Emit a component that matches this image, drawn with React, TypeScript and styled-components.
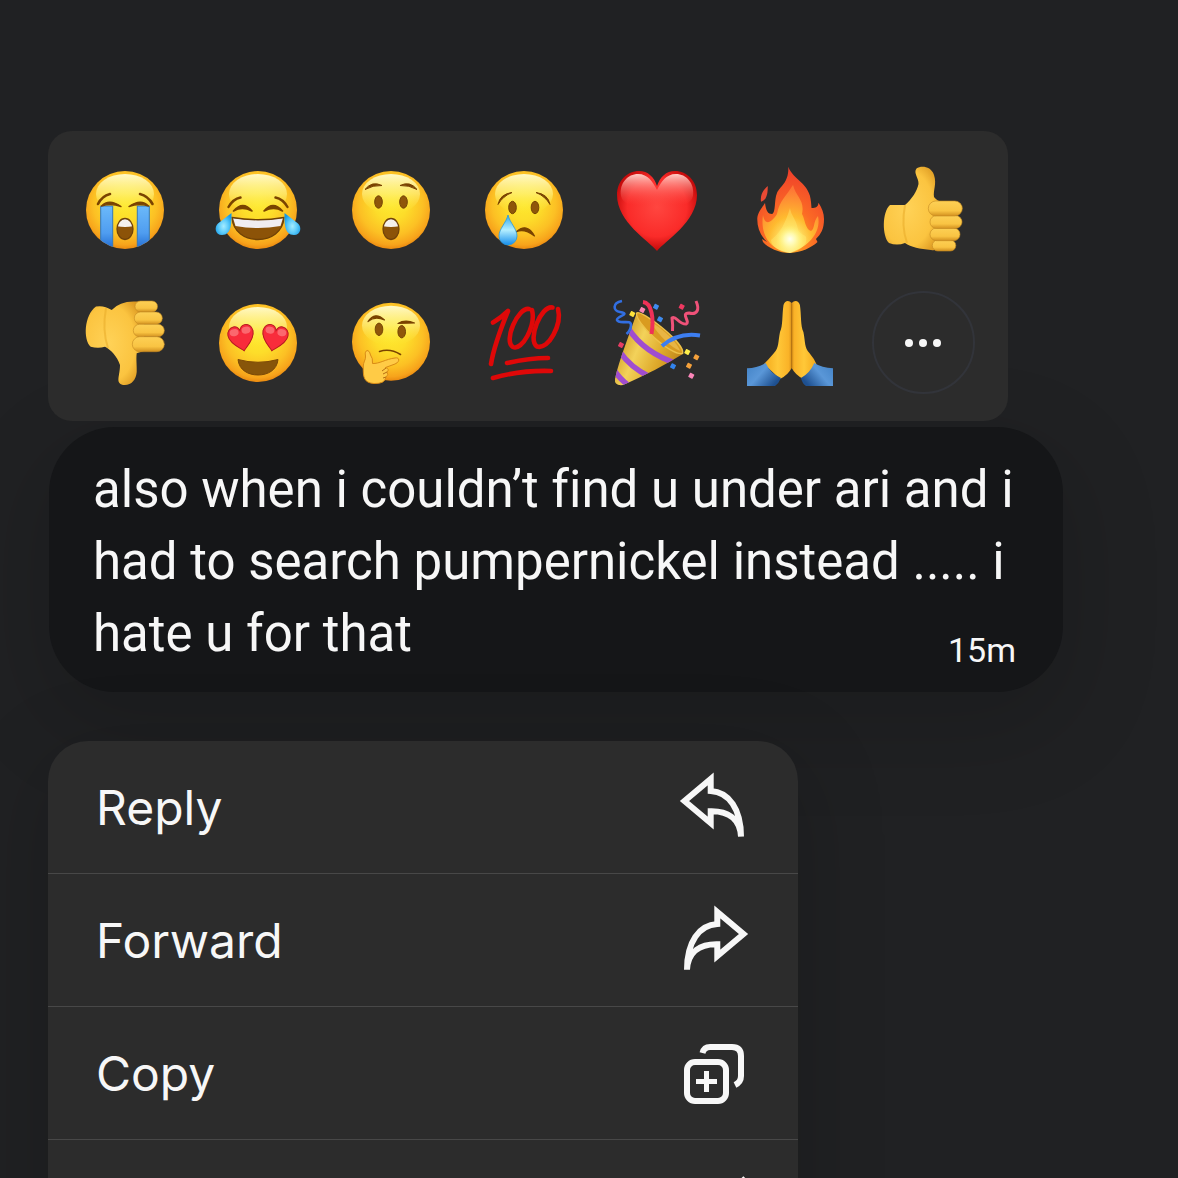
import React from "react";
import styled, { createGlobalStyle } from "styled-components";

const GlobalStyle = createGlobalStyle`
  * { box-sizing: border-box; }
  body { margin: 0; background: #202123; }
  button { font: inherit; color: inherit; border: 0; background: none; padding: 0; cursor: pointer; }
`;

const Screen = styled.main`
  display: flex;
  flex-direction: column;
  align-items: flex-start;
  height: 100vh;
  overflow: hidden;
  padding: 131px 48px 0;
  background: #202123;
  color: #f7f7f7;
  font-family: Inter, "Liberation Sans", sans-serif;
`;

const Reactions = styled.section`
  position: relative;
  z-index: 1;
  display: grid;
  grid-template-columns: repeat(7, 1fr);
  grid-auto-rows: 133px;
  width: 100%;
  max-width: 960px;
  padding: 12px 18px 12px 10px;
  border-radius: 24px;
  background: #2c2c2c;
`;

const Reaction = styled.button`
  display: grid;
  place-items: center;
`;

const EmojiArt = styled.svg`
  display: block;
  width: 90px;
  height: 90px;
  overflow: visible;
`;

const MoreCircle = styled.span`
  display: flex;
  align-items: center;
  justify-content: center;
  gap: 6px;
  width: 103px;
  height: 103px;
  border: 2px solid #32343a;
  border-radius: 50%;
`;

const Dot = styled.span`
  width: 8px;
  height: 8px;
  border-radius: 50%;
  background: #f7f7f7;
`;

const Bubble = styled.article`
  width: 100%;
  max-width: 1014px;
  margin: 6px 0 49px 1px;
  padding: 27px 47px 22px 44px;
  border-radius: 66px;
  background: #151618;
  font-family: Roboto, "Liberation Sans", sans-serif;
  box-shadow: 0 30px 90px 10px rgba(0, 0, 0, 0.15);
`;

const Message = styled.p`
  margin: 0;
  font-size: 51px;
  line-height: 72px;
  font-variant-ligatures: none;
`;

const Time = styled.time`
  float: right;
  margin-top: 32px;
  font-size: 34px;
  line-height: 40px;
`;

const Menu = styled.nav`
  position: relative;
  width: 100%;
  max-width: 750px;
  border-radius: 40px;
  background: #2c2c2c;
  box-shadow: 0 20px 90px rgba(0, 0, 0, 0.18);
`;

const MenuItem = styled.button`
  display: flex;
  align-items: center;
  justify-content: space-between;
  width: 100%;
  height: 133px;
  padding: 0 48px;
  font-size: 48px;
  text-align: left;

  &:not(:last-child) {
    border-bottom: 1px solid #484848;
  }
`;

const MenuIcon = styled.svg`
  width: 72px;
  height: 72px;
  margin-left: auto;
  fill: none;
  stroke: currentColor;
  stroke-width: 6;
`;

const BROWN = "#7a4300";
const HEART = "M45 86 C37 76 5 57 5 30 C5 16 15 6 27 6 C36 6 42 12 45 21 C48 12 54 6 63 6 C75 6 85 16 85 30 C85 57 53 76 45 86Z";
const CONE = "M24.7 15C18 35 7 62 3 81Q2 88 11 87C32 78 55 66 70.7 56Q48 44 24.7 15Z";

const Defs = styled.svg`
  position: absolute;
  width: 0;
  height: 0;
`;

const Gradients = () => (
  <Defs aria-hidden="true">
    <defs>
      <radialGradient id="face" cx=".5" cy=".42" r=".6">
        <stop offset="0" stopColor="#fee92e" />
        <stop offset=".35" stopColor="#fddd2a" />
        <stop offset=".68" stopColor="#fcc024" />
        <stop offset=".88" stopColor="#f7a31b" />
        <stop offset="1" stopColor="#e57f0c" />
      </radialGradient>
      <linearGradient id="shine" x1="0" y1="0" x2="0" y2="1">
        <stop offset="0" stopColor="#fffcd0" stopOpacity=".95" />
        <stop offset=".5" stopColor="#fff68a" stopOpacity=".6" />
        <stop offset="1" stopColor="#ffe832" stopOpacity="0" />
      </linearGradient>
      <linearGradient id="stream" x1="0" y1="0" x2="0" y2="1">
        <stop offset="0" stopColor="#6bb9fa" />
        <stop offset=".6" stopColor="#4f9df0" />
        <stop offset="1" stopColor="#1c65cc" />
      </linearGradient>
      <radialGradient id="tear" cx=".5" cy=".6" r=".6">
        <stop offset="0" stopColor="#a5ecff" />
        <stop offset=".5" stopColor="#5ccbfa" />
        <stop offset="1" stopColor="#149ae8" />
      </radialGradient>
      <linearGradient id="drop" x1="0" y1="0" x2="0" y2="1">
        <stop offset="0" stopColor="#2fa5ea" />
        <stop offset=".5" stopColor="#b4efff" />
        <stop offset="1" stopColor="#148dec" />
      </linearGradient>
      <radialGradient id="heart" cx=".5" cy=".45" r=".62">
        <stop offset="0" stopColor="#ff4640" />
        <stop offset=".6" stopColor="#fa2b29" />
        <stop offset=".85" stopColor="#c90d0d" />
        <stop offset="1" stopColor="#a80808" />
      </radialGradient>
      <linearGradient id="gloss" x1="0" y1="0" x2="0" y2="1">
        <stop offset="0" stopColor="#ffcdc6" />
        <stop offset="1" stopColor="#ff4b43" stopOpacity="0" />
      </linearGradient>
      <radialGradient id="flameOuter" cx=".5" cy=".85" r=".85">
        <stop offset="0" stopColor="#ffb41e" />
        <stop offset=".45" stopColor="#fb6a25" />
        <stop offset="1" stopColor="#ee3b2b" />
      </radialGradient>
      <radialGradient id="flameInner" cx=".5" cy=".86" r=".8">
        <stop offset="0" stopColor="#fffff0" />
        <stop offset=".22" stopColor="#fff27a" />
        <stop offset=".5" stopColor="#ffc531" />
        <stop offset="1" stopColor="#ff7c38" />
      </radialGradient>
      <radialGradient id="flameCore" cx=".5" cy=".5" r=".5">
        <stop offset="0" stopColor="#fffff0" />
        <stop offset=".4" stopColor="#fffcb5" stopOpacity=".85" />
        <stop offset="1" stopColor="#fff06a" stopOpacity="0" />
      </radialGradient>
      <radialGradient id="hand" cx=".4" cy=".5" r=".65">
        <stop offset="0" stopColor="#ffd257" />
        <stop offset=".7" stopColor="#fbc440" />
        <stop offset="1" stopColor="#dd9a22" />
      </radialGradient>
      <linearGradient id="finger" x1="0" y1="0" x2="0" y2="1">
        <stop offset="0" stopColor="#fdd055" />
        <stop offset=".65" stopColor="#f9c443" />
        <stop offset="1" stopColor="#d2901f" />
      </linearGradient>
      <linearGradient id="cone" x1="0" y1=".3" x2="1" y2=".75">
        <stop offset="0" stopColor="#c78b16" />
        <stop offset=".35" stopColor="#f3d25a" />
        <stop offset=".65" stopColor="#dfab2c" />
        <stop offset="1" stopColor="#b97c16" />
      </linearGradient>
      <linearGradient id="palm" x1="0" y1="0" x2="1" y2="0">
        <stop offset="0" stopColor="#f3a91c" />
        <stop offset=".5" stopColor="#ffc838" />
        <stop offset=".9" stopColor="#fab227" />
        <stop offset="1" stopColor="#d58d18" />
      </linearGradient>
      <linearGradient id="sleeve" x1="0" y1="0" x2="1" y2=".6">
        <stop offset="0" stopColor="#4282c6" />
        <stop offset=".5" stopColor="#5a97d8" />
        <stop offset="1" stopColor="#1e5090" />
      </linearGradient>
      <clipPath id="faceClip"><circle cx="45" cy="45" r="39" /></clipPath>
      <clipPath id="mouthClip"><ellipse cx="45" cy="64" rx="8" ry="10.5" /></clipPath>
      <clipPath id="coneClip"><path d={CONE} /></clipPath>
    </defs>
  </Defs>
);

const Face = ({ cy = 45 }: { cy?: number }) => (
  <>
    <circle cx="45" cy={cy} r="39" fill="url(#face)" />
    <ellipse cx="45" cy={cy - 16} rx="29" ry="20" fill="url(#shine)" />
  </>
);

const Lines = ({ d, width = 3 }: { d: string; width?: number }) => (
  <path d={d} fill="none" stroke={BROWN} strokeWidth={width} strokeLinecap="round" strokeLinejoin="round" />
);

const Eyes = ({ points }: { points: number[][] }) => (
  <>
    {points.map(([x, y]) => (
      <ellipse key={x} cx={x} cy={y} rx="3.8" ry="6.2" fill="#8f560a" stroke="#754503" strokeWidth="1" />
    ))}
  </>
);

const OpenMouth = () => (
  <>
    <ellipse cx="45" cy="64" rx="8" ry="10.5" fill="#8c5308" />
    <path d="M36 52H54V61Q45 63 36 61Z" fill="#f5f1ec" clipPath="url(#mouthClip)" />
    <ellipse cx="45" cy="64" rx="8" ry="10.5" fill="none" stroke="#71430a" strokeWidth="1.3" />
  </>
);

const Fingers = ({ boxes }: { boxes: number[][] }) => (
  <>
    {boxes.map(([x, y, w, h]) => (
      <rect key={y} x={x} y={y} width={w} height={h} rx={h / 2} fill="url(#finger)" stroke="#c58a22" strokeWidth=".6" />
    ))}
  </>
);

const HeartEye = ({ x, tilt }: { x: number; tilt: number }) => (
  <g transform={`translate(${x} 40) rotate(${tilt}) scale(.32) translate(-45 -45)`}>
    <path d={HEART} fill="#f82c3b" stroke="#b31a20" strokeWidth="3" />
    <ellipse cx="26" cy="24" rx="14" ry="11" fill="#ffb1ad" opacity=".45" />
    <ellipse cx="64" cy="24" rx="14" ry="11" fill="#ffb1ad" opacity=".45" />
  </g>
);

const confetti: [number, number, string][] = [
  [20.3, 16, "#ffe33b"], [30.3, 12, "#fb86b4"], [44, 8.7, "#3f8cf0"], [48, 21.3, "#3f8cf0"],
  [69.7, 8.7, "#ee3860"], [9, 47, "#e73d63"], [75.3, 54, "#fff04b"], [84.3, 59.3, "#f5a13b"],
  [77, 67.7, "#f5a13b"], [61, 68.3, "#3283ed"], [79.3, 77.7, "#fb86b9"],
];

const reactions: { name: string; art: React.ReactNode }[] = [
  {
    name: "Loudly crying",
    art: (
      <>
        <Face />
        <g clipPath="url(#faceClip)" stroke="#3479ba" strokeWidth="1">
          <path d="M20.7 41H32.7V86H20.7Z" fill="url(#stream)" />
          <path d="M57.3 41H69.3V86H57.3Z" fill="url(#stream)" />
        </g>
        <Lines d="M18 39Q22 31 30 29M60 29Q68 31 72.5 39" width={2.6} />
        <path d="M21.5 41Q29 33 41 41.5Q31 38 21.5 41ZM49 41.5Q61 33 68.5 41Q59 38 49 41.5Z" fill={BROWN} stroke={BROWN} strokeWidth="1.4" strokeLinejoin="round" />
        <OpenMouth />
      </>
    ),
  },
  {
    name: "Tears of joy",
    art: (
      <>
        <Face />
        <Lines d="M15.5 42Q20 34 27.5 32.5M62.5 32.5Q70 34 74.5 42" width={2.4} />
        <path d="M20.5 46Q30 35 39 46Q29 41 20.5 46ZM51 46Q60 35 69.5 46Q61 41 51 46Z" fill={BROWN} stroke={BROWN} strokeWidth="1.6" strokeLinejoin="round" />
        <path d="M19 52.5Q45 57 71 52.5C70 67 58 74.5 45 74.5S20 67 19 52.5Z" fill="#8c5308" />
        <path d="M20 53Q45 57 70 53L67.5 61Q45 65 22.5 61Z" fill="#f0edf0" />
        <path d="M19 52.5Q45 57 71 52.5C70 67 58 74.5 45 74.5S20 67 19 52.5Z" fill="none" stroke="#6f4105" strokeWidth="1.3" />
        <path d="M18.5 48C18.5 57 19 70 9 70C2 70 1 62 5 58.5Q12 53 18.5 48Z" fill="url(#tear)" />
        <path d="M71.5 48C71.5 57 71 70 81 70C88 70 89 62 85 58.5Q78 53 71.5 48Z" fill="url(#tear)" />
      </>
    ),
  },
  {
    name: "Astonished",
    art: (
      <>
        <Face />
        <path d="M19 24.5Q26 15.5 36 20.5Q27 20 19 24.5ZM54 20.5Q64 15.5 71 24.5Q63 20 54 20.5Z" fill={BROWN} stroke={BROWN} strokeLinejoin="round" />
        <Eyes points={[[32.5, 37], [57.5, 37]]} />
        <OpenMouth />
      </>
    ),
  },
  {
    name: "Crying",
    art: (
      <>
        <Face />
        <path d="M19 39.5Q21 29 33 27.5Q24 31 19 39.5ZM57 27.5Q69 29 71 39.5Q66 31 57 27.5Z" fill={BROWN} stroke={BROWN} strokeLinejoin="round" />
        <Eyes points={[[33.5, 42.5], [56, 42.5]]} />
        <path d="M37 67Q48 57 55.5 71Q45 63 37 67Z" fill={BROWN} stroke={BROWN} strokeWidth="1.2" strokeLinejoin="round" />
        <path d="M29 50C31 58 38 64 38 71A9 9 0 0 1 20 71C20 64 27 58 29 50Z" fill="url(#drop)" stroke="#229ae5" strokeWidth=".8" />
      </>
    ),
  },
  {
    name: "Heart",
    art: (
      <>
        <path d={HEART} fill="url(#heart)" />
        <path d="M9 31C7 18 16 9 26 9C36 9 41 17 45 25C49 17 54 9 64 9C74 9 83 18 81 31C78 43 62 40 45 40S12 43 9 31Z" fill="url(#gloss)" />
      </>
    ),
  },
  {
    name: "Fire",
    art: (
      <>
        <path d="M43.3 1.7C48 15 65 18 66 37L66.5 43C71 43 73 42 73.5 37.7C77 43 79 48 79 54C79 64 76 69 71 74L72.5 77C66 83 57 87 45 88C34 88 23 83 18 77L17 74L22 77C15 70 12 62 12.3 53C13 47 17 43 20 38C21 46 23 49 27 49C31 48 29 35 32 28C35 21 44 18 43.3 1.7Z" fill="url(#flameOuter)" />
        <path d="M22.7 21C23 30 21 35 16 36.7C15 30 18 25 22.7 21Z" fill="#e94a34" />
        <path d="M48 20C51 32 60 35 57 49C60 54 60 64 66 66C70 64 68 57 73 51C76 64 68 80 45 88C25 85 15 70 18 50C20 62 27 57 32 49C34 36 42 30 48 20Z" fill="url(#flameInner)" opacity=".85" />
        <path d="M45 43C46 51 52 55 53 65C57 72 63 68 61 77C59 82 52 87 45 88C34 87 26 81 26 75C34 69 40 60 45 43Z" fill="#fff47c" opacity=".35" />
        <circle cx="45" cy="74" r="14" fill="url(#flameCore)" />
      </>
    ),
  },
  {
    name: "Thumbs up",
    art: (
      <>
        <path d="M38.5 3.5C43 .5 53 1 56 10C59 19 55 25 56 32Q59 36 64 37V82Q59 86 53 85C42 84 33 82 27 78Q19 81 11 78C4 71 4 47 12 40Q18 40 27 40C34 34 39 26 40.5 19C41 13 35 8 38.5 3.5Z" fill="url(#hand)" />
        <path d="M27 40Q23 61 29 78" fill="none" stroke="#eaad2c" strokeWidth="2" opacity=".6" />
        <Fingers boxes={[[54.3, 75, 23.5, 11], [52, 63, 30, 12.7], [52, 50.5, 32, 13], [50.3, 36, 34, 15]]} />
      </>
    ),
  },
  {
    name: "Thumbs down",
    art: (
      <>
        <path d="M16 8.5Q24 7 31.7 12Q40 3 55 3.5H64V53L56.7 55.3C56 61 57 69 56.7 74C56 82 51 88 43 87C35 85 40 78 40 67C37 58 31 52 25 48.7Q18 51 10.7 48.7C3 42 4 17 16 8.5Z" fill="url(#hand)" />
        <path d="M26 10Q22 32 28 50" fill="none" stroke="#eaad2c" strokeWidth="2" opacity=".6" />
        <Fingers boxes={[[55, 3, 22.5, 11], [54.3, 14, 28, 12.3], [53.3, 26.3, 31, 12.5], [52.3, 38.7, 32, 15]]} />
      </>
    ),
  },
  {
    name: "Heart eyes",
    art: (
      <>
        <Face />
        <HeartEye x={28.5} tilt={-12} />
        <HeartEye x={61.5} tilt={12} />
        <path d="M25 61.5Q45 67 65 61.5C64 72 55 77 45 77S26 72 25 61.5Z" fill="#87550a" stroke="#7a4806" strokeWidth="1" strokeLinejoin="round" />
      </>
    ),
  },
  {
    name: "Thinking",
    art: (
      <>
        <Face cy={43.7} />
        <path d="M22 23.5Q29 13 38.5 22Q29 17.5 22 23.5ZM52 25.5Q59 21 68.5 25Q60 25 52 25.5Z" fill={BROWN} stroke={BROWN} strokeWidth="1.2" strokeLinejoin="round" />
        <Eyes points={[[33, 31.3], [55.7, 33.7]]} />
        <Lines d="M33.5 53.5Q44 50 54.5 56.5" width={1.6} />
        <path d="M19.5 58C18 52 23 50 24.5 57Q27 60 26.5 65.5C33 66 40 61 49 60C54 59 54 64 49 66L39.5 69.5Q44 71 41 74Q43 77 40 79Q39 86 28 85.5C18 85 17 79 17.3 69C17 64 20 62 19.5 58Z" fill="#ffcb46" stroke="#d98b16" strokeWidth="1" />
        <path d="M40 70L36 73M41 74L37 76M40 79L37 80" stroke="#b56d12" strokeWidth="1" />
      </>
    ),
  },
  {
    name: "Hundred points",
    art: (
      <g fill="none" stroke="#df0808" strokeWidth="4.6" strokeLinecap="round" strokeLinejoin="round">
        <path d="M14 24.5Q22 20 29 13C22 30 15 48 12 66" />
        <path d="M50 11C39 9 24 43 34 49C43 53 57 28 53 12" />
        <path d="M73.5 9.5C62 7 48 42 58 48.5C70 52 83 26 79 11" />
        <path d="M28 65Q50 60 69 60M14 80Q42 72 72 73" />
      </g>
    ),
  },
  {
    name: "Party popper",
    art: (
      <>
        <path d={CONE} fill="url(#cone)" />
        <g clipPath="url(#coneClip)" fill="none" stroke="#a04dd0" strokeWidth="5.5">
          <path d="M16 30Q32 55 66 66M8 54Q18 69 38 79M2 72Q7 80 17 88" />
        </g>
        <path d="M24.7 15C29 11 73 45 70.7 55.3C60 59 22 24 24.7 15Z" fill="#d99b20" stroke="#eec249" strokeWidth="1.4" />
        <path d="M38 24C45 26 65 43 68 53Q54 47 38 24Z" fill="#e8b544" />
        <g fill="none" strokeLinecap="butt" strokeLinejoin="round">
          <path d="M31 4C40 5 42 21 39.5 36" stroke="#ef3158" strokeWidth="4" />
          <path d="M50 48Q66 34 88 37.5" stroke="#3d7ef1" strokeWidth="4" />
          <path d="M10 3C0 5 1 13 8 14C20 16 4 18 5 22C7 27 19 21 19 27Q19 32 14.5 36" stroke="#326fe2" strokeWidth="2.6" />
          <path d="M84 3C88 12 85 17 77 15C68 15 79 24 74 26C66 26 64 17 60 20Q61 27 60.5 33" stroke="#ef5279" strokeWidth="3" />
        </g>
        {confetti.map(([x, y, color]) => (
          <rect key={`${x}-${y}`} x={x - 2.4} y={y - 2.4} width="4.8" height="4.8" rx=".6" fill={color} transform={`rotate(28 ${x} ${y})`} />
        ))}
      </>
    ),
  },
  {
    name: "Folded hands",
    art: (
      <>
        <path d="M46.7 5C44 2 40 2 38.5 7C37 17 38 28 35 34C33 44 34 50 29 55Q24 61 19 66L35 81Q43 77 46.7 70Z" fill="url(#palm)" />
        <g transform="translate(93.4 0) scale(-1 1)">
          <path d="M46.7 5C44 2 40 2 38.5 7C37 17 38 28 35 34C33 44 34 50 29 55Q24 61 22 66L35 81Q43 77 46.7 70Z" fill="url(#palm)" />
        </g>
        <path d="M46.7 6V70" fill="none" stroke="#b9740f" strokeWidth="1" opacity=".8" />
        <path d="M2 70.3Q13 70 20.7 65Q25 75 36 80Q34 85 30 88H2Z" fill="url(#sleeve)" />
        <g transform="translate(90 0) scale(-1 1)">
          <path d="M2 70.3Q13 70 20.7 65Q25 75 34 80Q33 85 29 88H2Z" fill="url(#sleeve)" />
        </g>
      </>
    ),
  },
];

const ReplyArrow = () => (
  <path d="M63 65.7C63 38 51 21 32.7 20V8L6.5 30L32.7 52V40.3C49 40 62 47 63 65.7" strokeMiterlimit="10" />
);

const menuItems: { label: string; iconOnly?: boolean; icon: React.ReactNode }[] = [
  { label: "Reply", icon: <ReplyArrow /> },
  { label: "Forward", icon: <g transform="translate(72 0) scale(-1 1)"><ReplyArrow /></g> },
  {
    label: "Copy",
    icon: (
      <>
        <rect x="9" y="25" width="39" height="39" rx="8" />
        <path d="M28.5 34V55M18 44.5H39" strokeWidth="5" />
        <path d="M24.5 16Q26 10 32 10H54Q63 10 63 19V39Q63 45 57 48" />
      </>
    ),
  },
  { label: "More actions", iconOnly: true, icon: <path d="M66 6L40 32L48 40Z" strokeWidth="2" /> },
];

export default function App() {
  return (
    <>
      <GlobalStyle />
      <Gradients />
      <Screen>
        <Reactions aria-label="Reactions">
          {reactions.map(({ name, art }) => (
            <Reaction key={name} type="button" aria-label={name}>
              <EmojiArt viewBox="0 0 90 90" aria-hidden="true">{art}</EmojiArt>
            </Reaction>
          ))}
          <Reaction type="button" aria-label="More reactions">
            <MoreCircle><Dot /><Dot /><Dot /></MoreCircle>
          </Reaction>
        </Reactions>
        <Bubble>
          <Message>
            also when i couldn’t find u under ari and i had to search pumpernickel instead ..... i hate u for that
            <Time>15m</Time>
          </Message>
        </Bubble>
        <Menu aria-label="Message actions">
          {menuItems.map(({ label, iconOnly, icon }) => (
            <MenuItem key={label} type="button" aria-label={label}>
              {!iconOnly && label}
              <MenuIcon viewBox="0 0 72 72" aria-hidden="true">{icon}</MenuIcon>
            </MenuItem>
          ))}
        </Menu>
      </Screen>
    </>
  );
}
